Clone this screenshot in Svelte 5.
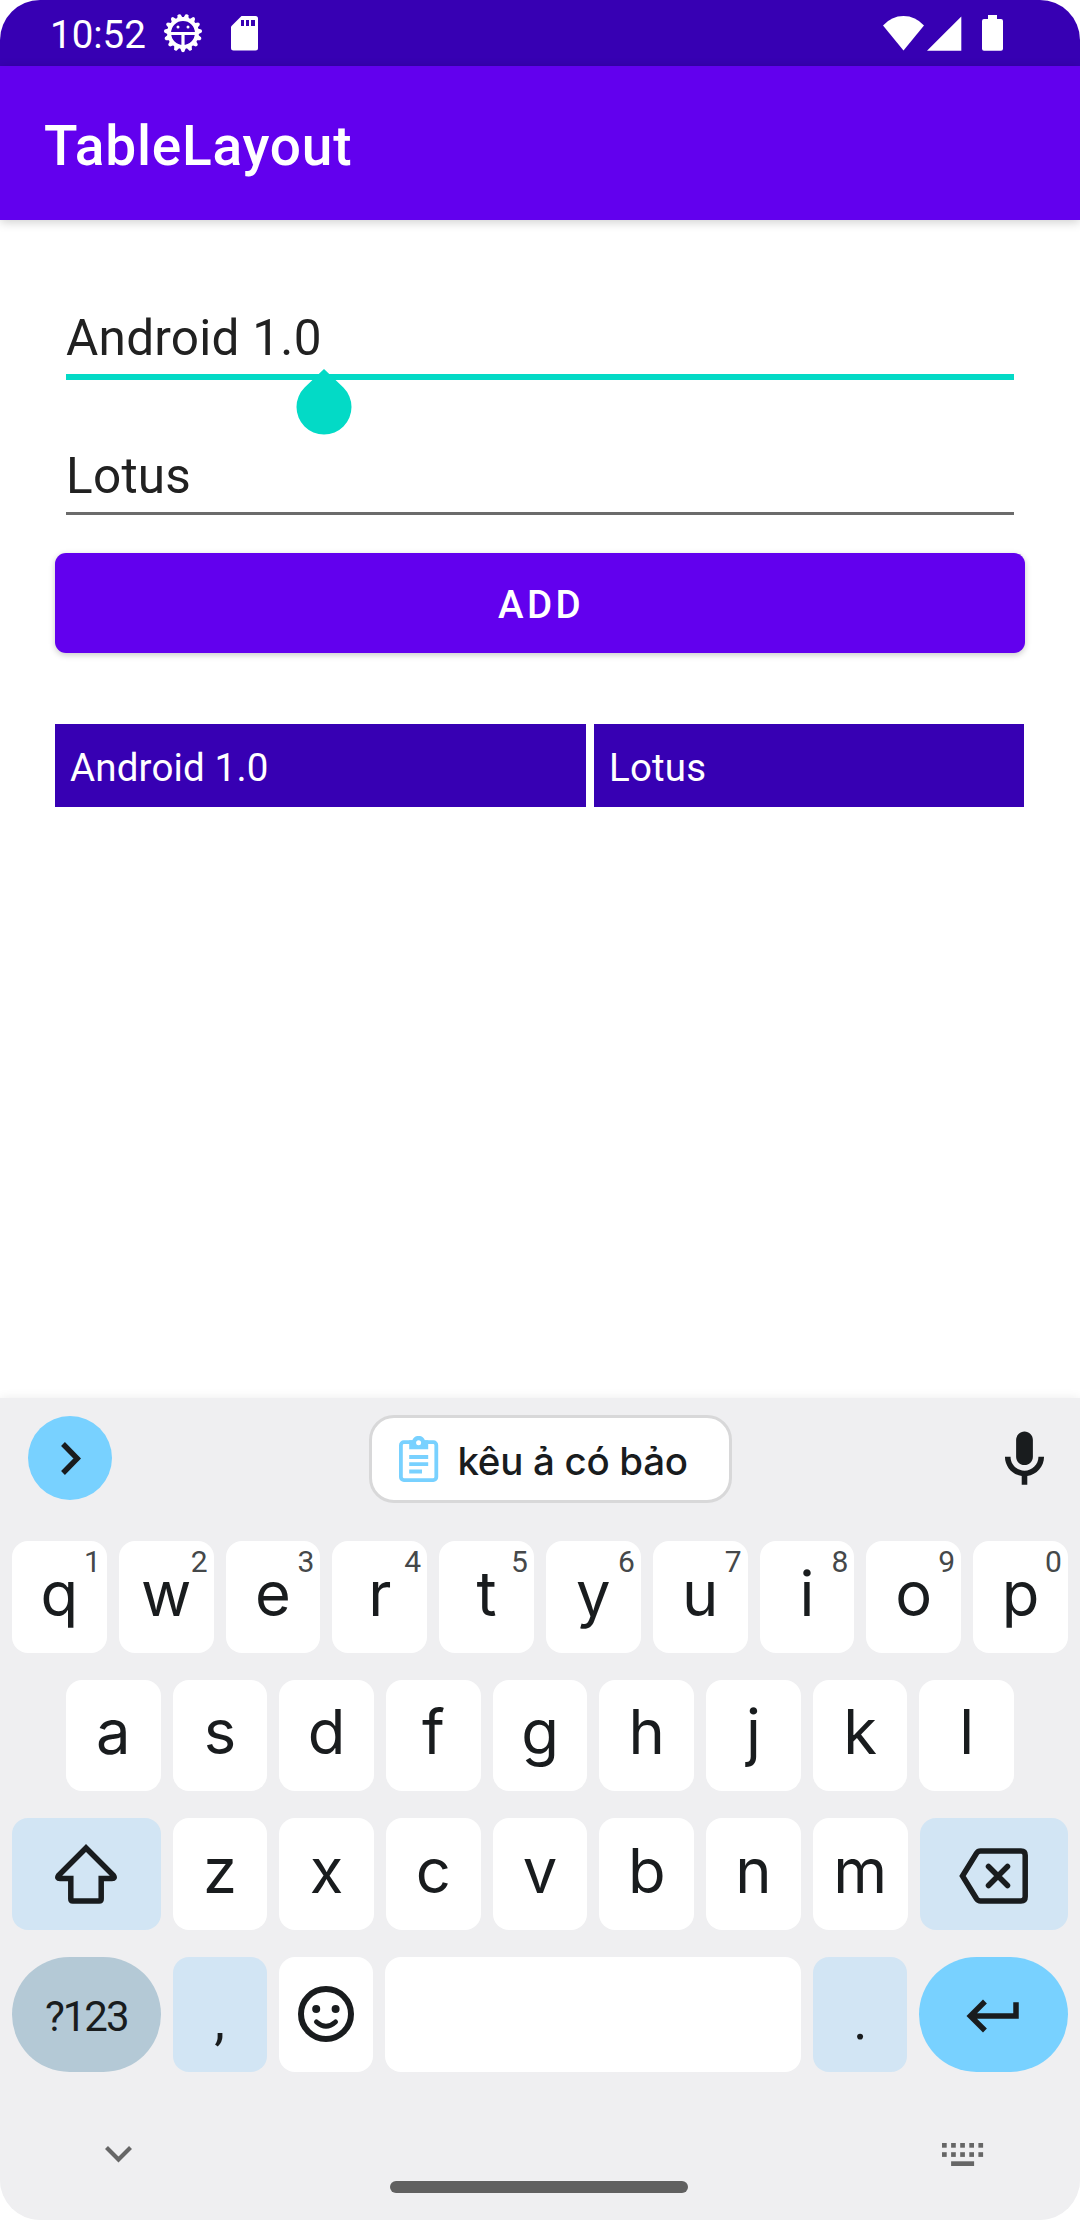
<script>
  const topRow = [...'qwertyuiop'].map((letter, i) => ({ letter, hint: (i + 1) % 10 }));
  const homeRow = [...'asdfghjkl'];
  const bottomRow = [...'zxcvbnm'];
  const teeth = Array.from({ length: 15 }, (_, i) => i * 24 + 12);
  const dots = [0, 1, 2, 3, 4];
</script>

<main class="screen">
  <header class="status">
    <span class="clock">10:52</span>
    <svg class="gear" width="40" height="40" viewBox="-20 -20 40 40">
      {#each teeth as angle}
        <path d="M-3.200 -14L-1.500 -18.500Q0 -20 1.500 -18.500L3.200 -14Z" fill="#fff" transform="rotate({angle})" />
      {/each}
      <circle r="13.900" fill="none" stroke="#fff" stroke-width="4" />
      <path d="M-13 0.500H13M0 0.500V14" stroke="#fff" stroke-width="3.200" />
      <circle cx="-5" cy="-6" r="1.500" fill="#fff" />
      <circle cx="5" cy="-6" r="1.500" fill="#fff" />
    </svg>
    <svg class="sd" width="27" height="35" viewBox="0 0 27 35">
      <path d="M10.500 0H24.500Q27 0 27 2.500V32Q27 34.500 24.500 34.500H2.500Q0 34.500 0 32V10.500Z" fill="#fff" />
      <path d="M10 4h3v6h-3zM15 4h3v6h-3zM20 4h4v6h-4z" fill="#3700b3" />
    </svg>
    <span class="grow"></span>
    <svg class="wifi" width="41" height="35" viewBox="0 0 41 35">
      <path d="M20.500 34.500L0 9.500Q8.500 0 20.500 0T41 9.500Z" fill="#fff" />
    </svg>
    <svg class="signal" width="35" height="35" viewBox="0 0 35 35">
      <path d="M0 34.700H34.300V0.500Z" fill="#fff" />
    </svg>
    <svg class="battery" width="21" height="36" viewBox="0 0 21 36">
      <path d="M6 0h9v4h4q2 0 2 2v27.700q0 2-2 2H2q-2 0-2-2V6q0-2 2-2h4z" fill="#fff" />
    </svg>
  </header>

  <div class="appbar"><h1>TableLayout</h1></div>

  <section class="content">
    <div class="field active">
      <span>Android 1.0</span>
      <svg class="handle" width="56" height="66" viewBox="0 0 56 66">
        <path d="M28 0L47.400 18.600A27.500 27.500 0 1 1 8.600 18.600Z" fill="#03dac6" />
      </svg>
    </div>
    <div class="field"><span>Lotus</span></div>
    <button class="add">ADD</button>
    <div class="table">
      <div class="cell">Android 1.0</div>
      <div class="cell">Lotus</div>
    </div>
  </section>

  <section class="keyboard">
    <div class="toolbar">
      <div class="expand">
        <svg width="20" height="33" viewBox="0 0 20 33">
          <path d="M2 2L16.300 16.500L2 31" fill="none" stroke="#191c1e" stroke-width="5.400" />
        </svg>
      </div>
      <div class="chip">
        <svg width="40" height="47" viewBox="0 0 40 47">
          <rect x="1.900" y="6.200" width="35.400" height="37.900" rx="3" fill="none" stroke="#78d1ff" stroke-width="3.800" />
          <path d="M10.200 4.300H13.300A6.700 6.700 0 0 1 25.900 4.300H29.200V13.300H10.200Z" fill="#78d1ff" />
          <circle cx="19.600" cy="6.800" r="2.500" fill="#fff" />
          <path d="M10.200 21H29.200M10.200 28.200H29.200M10.200 35.500H23" stroke="#78d1ff" stroke-width="3.800" />
        </svg>
        <span>kêu ả có bảo</span>
      </div>
      <svg class="mic" width="67" height="67" viewBox="0 0 24 24">
        <path fill="#191c1e" d="M12 14c1.660 0 3-1.340 3-3V5c0-1.660-1.340-3-3-3S9 3.340 9 5v6c0 1.660 1.340 3 3 3zM17 11c0 2.760-2.240 5-5 5s-5-2.240-5-5H5c0 3.530 2.610 6.430 6 6.920V21h2v-3.080c3.390-.490 6-3.390 6-6.920z" />
      </svg>
    </div>

    <div class="row">
      {#each topRow as key}
        <div class="key"><span>{key.letter}</span><small>{key.hint}</small></div>
      {/each}
    </div>
    <div class="row inset">
      {#each homeRow as letter}
        <div class="key"><span>{letter}</span></div>
      {/each}
    </div>
    <div class="row">
      <div class="key wide tint">
        <svg class="shift" width="62" height="60" viewBox="0 0 62 60">
          <path d="M31 4L3.500 31.500Q1.500 34.500 5 34.500H15.800V55Q15.800 57 17.800 57H44.200Q46.200 57 46.200 55V34.500H57Q60.500 34.500 58.500 31.500Z" fill="none" stroke="#191c1e" stroke-width="5.500" />
        </svg>
      </div>
      {#each bottomRow as letter}
        <div class="key"><span>{letter}</span></div>
      {/each}
      <div class="key wide tint">
        <svg class="delete" width="69" height="56" viewBox="0 0 69 56">
          <path d="M3.500 28L17.500 5.200Q19 3 21.500 3H62Q66.200 3 66.200 7.200V48.800Q66.200 53 62 53H21.500Q19 53 17.500 50.800Z" fill="none" stroke="#191c1e" stroke-width="5.500" />
          <path d="M29.500 18.500L48.500 37.500M48.500 18.500L29.500 37.500" stroke="#191c1e" stroke-width="5.500" stroke-linecap="round" />
        </svg>
      </div>
    </div>
    <div class="row last">
      <div class="key wide symbols"><span>?123</span></div>
      <div class="key tint punct"><span>,</span></div>
      <div class="key">
        <svg width="56" height="56" viewBox="0 0 56 56">
          <circle cx="28" cy="28" r="25" fill="none" stroke="#191c1e" stroke-width="6" />
          <circle cx="18.200" cy="23" r="4" fill="#191c1e" />
          <circle cx="37.600" cy="23" r="4" fill="#191c1e" />
          <path d="M18.500 36Q28 44.500 37.500 36" fill="none" stroke="#191c1e" stroke-width="5" stroke-linecap="round" />
        </svg>
      </div>
      <div class="key space"></div>
      <div class="key tint punct"><span>.</span></div>
      <div class="key wide enter">
        <svg width="66" height="66" viewBox="0 0 24 24">
          <path fill="#191c1e" d="M19 7v4H5.830l3.580-3.590L8 6l-6 6 6 6 1.410-1.410L5.830 13H21V7z" />
        </svg>
      </div>
    </div>

    <footer class="nav">
      <svg class="hide" width="27" height="17" viewBox="0 0 27 17">
        <path d="M1.500 1.500L13.500 13.500L25.500 1.500" fill="none" stroke="#666" stroke-width="4.200" />
      </svg>
      <div class="pill"></div>
      <svg class="ime" width="42" height="23" viewBox="0 0 42 23">
        {#each dots as i}
          <rect x={i * 9.1} y="0" width="4.700" height="4.700" fill="#666" />
          <rect x={i * 9.1} y="9.200" width="4.700" height="4.700" fill="#666" />
        {/each}
        <rect x="9.100" y="18.300" width="23" height="4.700" fill="#666" />
      </svg>
    </footer>
  </section>
</main>

<style>
  :global(body) {
    margin: 0;
    background: #fff;
  }
  .screen {
    width: 1080px;
    height: 2220px;
    display: flex;
    flex-direction: column;
    overflow: hidden;
    border-radius: 40px;
    background: #fff;
    font-family: Roboto, 'Liberation Sans', sans-serif;
  }
  svg {
    display: block;
    flex: none;
  }
  .status {
    box-sizing: border-box;
    height: 66px;
    padding: 0 77px 0 50px;
    display: flex;
    align-items: center;
    background: #3700b3;
    color: #fff;
  }
  .clock {
    width: 113px;
    font-size: 38.500px;
    line-height: 66px;
    padding-top: 3px;
    box-sizing: border-box;
  }
  .sd {
    margin-left: 28px;
  }
  .grow {
    flex: 1;
  }
  .signal {
    margin: 0 20px 0 3px;
  }
  .appbar {
    height: 154px;
    padding-left: 44px;
    display: flex;
    align-items: center;
    background: #6200ee;
    color: #fff;
    box-shadow: 0 2px 10px rgba(0, 0, 0, 0.2);
  }
  h1 {
    margin: 6px 0 0;
    font-size: 55px;
    font-weight: 500;
    line-height: 64px;
    letter-spacing: 0.800px;
  }
  .content {
    flex: 1;
    padding: 55px 55px 0;
  }
  .field {
    position: relative;
    box-sizing: border-box;
    height: 138px;
    margin: 0 11px;
    padding-top: 34px;
    font-size: 49.500px;
    line-height: 58px;
    letter-spacing: 0.250px;
    color: #212121;
  }
  .field::after {
    content: '';
    display: block;
    height: 2.500px;
    margin-top: 7px;
    background: #6b6b6b;
  }
  .field span {
    display: block;
  }
  .field.active::after {
    height: 6px;
    background: #03dac6;
  }
  .handle {
    position: absolute;
    left: 230px;
    top: 94px;
  }
  .add {
    display: block;
    width: 970px;
    height: 100px;
    margin: 2px 0 71px;
    padding: 2px 0 0 2px;
    border: 0;
    border-radius: 11px;
    background: #6200ee;
    color: #fff;
    font: 500 38.500px Roboto, sans-serif;
    letter-spacing: 3.440px;
    box-shadow: 0 2px 6px rgba(0, 0, 0, 0.22);
  }
  .table {
    display: grid;
    grid-template-columns: 531px 430px;
    gap: 8px;
  }
  .cell {
    height: 83px;
    padding-left: 15px;
    background: #3700b3;
    color: #fff;
    font-size: 38.500px;
    line-height: 87px;
    letter-spacing: 0.160px;
  }
  .keyboard {
    box-sizing: border-box;
    height: 822px;
    background: #efeff1;
    color: #191c1e;
    box-shadow: 0 0 10px rgba(0, 0, 0, 0.08);
    font-family: Inter, Roboto, sans-serif;
  }
  .toolbar {
    box-sizing: border-box;
    height: 143px;
    padding: 17px 22px 0 28px;
    display: flex;
    align-items: flex-start;
    justify-content: space-between;
  }
  .expand {
    width: 84px;
    height: 84px;
    margin-top: 1px;
    border-radius: 50%;
    background: #78d1ff;
    display: grid;
    place-items: center;
  }
  .expand svg {
    margin-left: 2px;
  }
  .chip {
    box-sizing: border-box;
    width: 363px;
    height: 88px;
    margin-right: 3px;
    padding-left: 27px;
    border: 3px solid #d8d8d9;
    border-radius: 25px;
    background: #fff;
    display: flex;
    align-items: center;
    gap: 19px;
    white-space: nowrap;
    font-size: 38.500px;
    font-weight: 500;
    letter-spacing: -0.300px;
  }
  .chip span {
    margin-top: 4px;
  }
  .mic {
    margin-top: 11px;
  }
  .row {
    height: 111.500px;
    margin: 0 12px 27px;
    display: flex;
    gap: 12px;
  }
  .row.inset {
    margin: 0 66px 27px;
  }
  .row.last {
    height: 115px;
    margin-bottom: 0;
  }
  .key {
    position: relative;
    flex: 1 1 0;
    border-radius: 16px;
    background: #fff;
    display: flex;
    align-items: center;
    justify-content: center;
    font-size: 61.500px;
    line-height: 78px;
  }
  .key span {
    margin-top: -6px;
  }
  .key small {
    position: absolute;
    top: 6px;
    right: 6px;
    font: 450 30px/30px Roboto, sans-serif;
    color: #45484a;
  }
  .key.wide {
    flex: 0 0 148.500px;
  }
  .tint {
    background: #d2e5f4;
  }
  .key.space {
    flex: 0 0 416px;
  }
  .key.symbols {
    border-radius: 58px;
    background: #b4c9d6;
    font: 450 42px Roboto, sans-serif;
    letter-spacing: -2px;
  }
  .key.symbols span {
    margin-top: 4px;
  }
  .key.enter {
    border-radius: 58px;
    background: #78d1ff;
  }
  .enter svg {
    margin-top: 4px;
  }
  .delete {
    margin-top: 4px;
  }
  .key.punct {
    font: 400 54px/60px Roboto, sans-serif;
  }
  .key.punct span {
    margin-top: 13px;
  }
  .nav {
    display: grid;
    grid-template-columns: 390px 298px 392px;
    height: 148px;
    align-items: start;
  }
  .hide {
    margin: 74px 0 0 105px;
  }
  .pill {
    height: 12px;
    margin-top: 109px;
    border-radius: 6px;
    background: #606060;
  }
  .ime {
    margin: 71px 0 0 254px;
  }
</style>
